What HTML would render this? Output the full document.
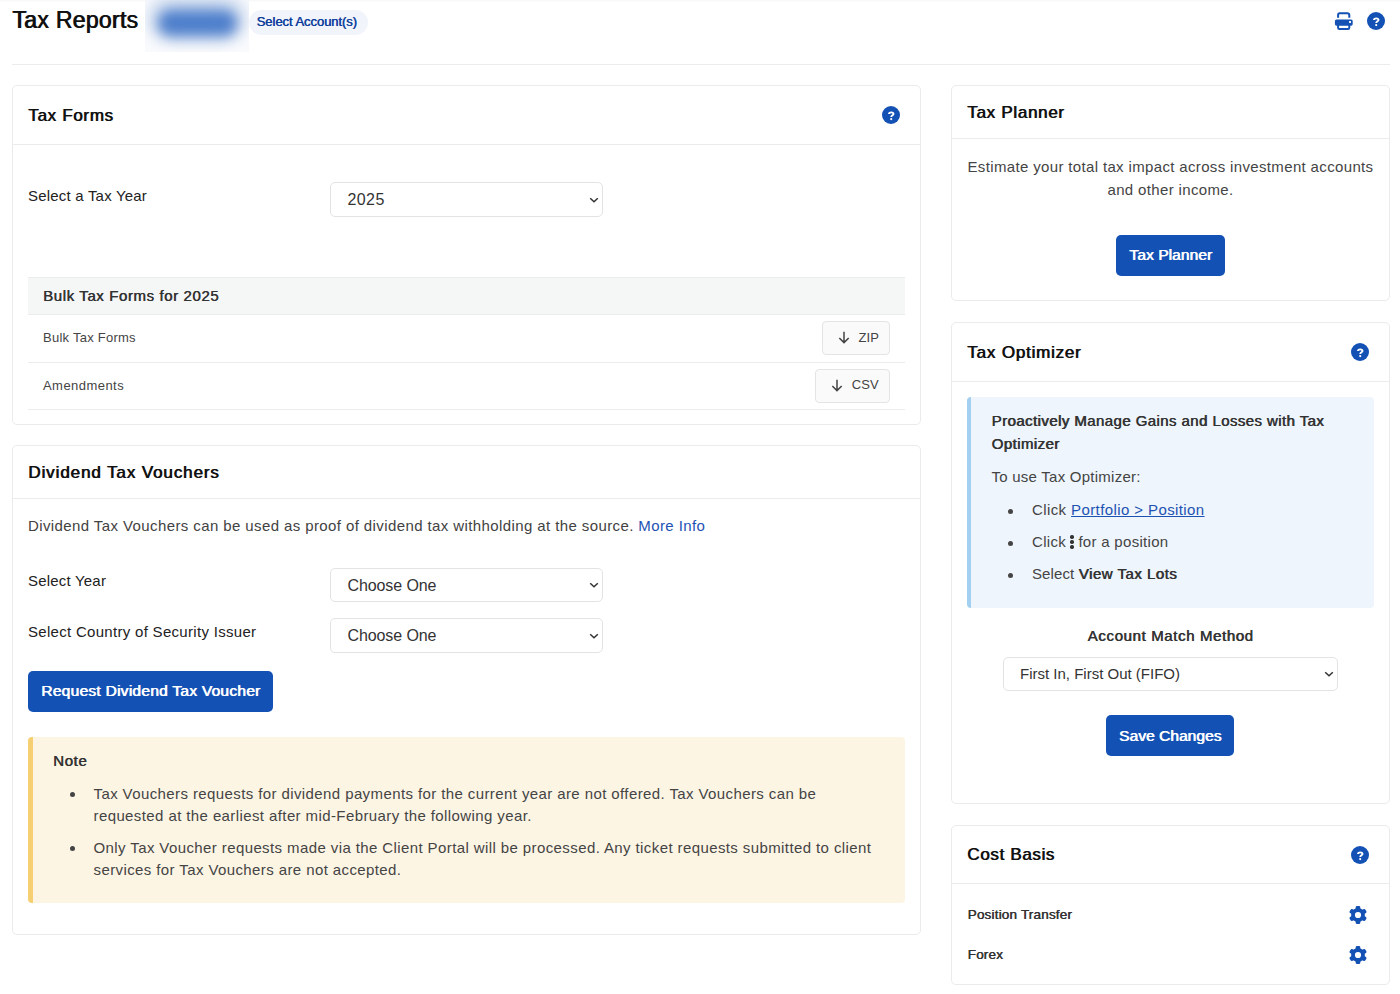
<!DOCTYPE html>
<html><head><meta charset="utf-8"><title>Tax Reports</title>
<style>
html,body{margin:0;padding:0;width:1400px;height:994px;overflow:hidden;background:#fff;}
body{position:relative;font-family:"Liberation Sans", sans-serif;}
.t{position:absolute;white-space:nowrap;}
.r{position:absolute;}
</style></head><body>
<div class="r" style="left:0px;top:0px;width:1400px;height:2px;background:linear-gradient(#f8f8f8 50%,#fcfcfc 50%)"></div>
<div class="t" style="left:12px;top:6px;font-size:23px;line-height:28px;font-weight:normal;color:#111;letter-spacing:0.3px;text-shadow:0.9px 0 0 #111;">Tax Reports</div>
<div class="r" style="left:145px;top:0px;width:104px;height:52px;overflow:hidden;background:#fafbfd"><div class="r" style="left:4px;top:-4px;width:96px;height:44px;border-radius:22px;background:rgba(90,135,205,0.30);filter:blur(9px)"></div><div class="r" style="left:13px;top:10px;width:79px;height:26px;border-radius:13px;background:#4d7ecb;filter:blur(6.5px)"></div></div>
<div class="r" style="left:249px;top:10px;width:119px;height:25px;background:#f1f4fb;border-radius:13px"></div>
<div class="t" style="left:256.5px;top:14px;font-size:13px;line-height:16px;font-weight:normal;color:#0f3e9c;letter-spacing:-0.05px;text-shadow:0.5px 0 0 #0f3e9c;">Select Account(s)</div>
<svg class="r" style="left:1333px;top:11px" width="21" height="20" viewBox="0 0 21 20"><path d="M5.1 6.7 V3.9 Q5.1 2.3 6.7 2.3 H14.3 Q16.3 2.3 16.3 4.3 V6.7" fill="none" stroke="#1351b4" stroke-width="2"/><rect x="5.1" y="12" width="11.2" height="6" rx="1.3" fill="#fff" stroke="#1351b4" stroke-width="2"/><rect x="1.9" y="8.4" width="17.8" height="6.3" rx="1.6" fill="#1351b4"/><rect x="16" y="10.1" width="2" height="1.8" fill="#fff"/></svg>
<svg class="r" style="left:1367.0px;top:12.0px" width="18" height="18" viewBox="0 0 18 18"><circle cx="9" cy="9" r="9" fill="#1351b4"/><path d="M7 7.9 C7 6.9 7.9 6.35 9.2 6.35 C10.6 6.35 11.5 7.0 11.5 8.0 C11.5 9.3 9.2 9.3 9.2 11.1" fill="none" stroke="#fff" stroke-width="1.9" stroke-linecap="butt"/><circle cx="9.2" cy="13.05" r="1.1" fill="#fff"/></svg>
<div class="r" style="left:12px;top:64px;width:1378px;height:1px;background:#ececec"></div>
<div class="r" style="left:12px;top:85px;width:909px;height:340px;border:1px solid #ebebeb;border-radius:5px;box-sizing:border-box;background:#fff"></div>
<div class="t" style="left:28px;top:104.7px;font-size:17px;line-height:22px;font-weight:normal;color:#111;letter-spacing:0.68px;text-shadow:0.75px 0 0 #111;">Tax Forms</div>
<svg class="r" style="left:882.0px;top:106.0px" width="18" height="18" viewBox="0 0 18 18"><circle cx="9" cy="9" r="9" fill="#1351b4"/><path d="M7 7.9 C7 6.9 7.9 6.35 9.2 6.35 C10.6 6.35 11.5 7.0 11.5 8.0 C11.5 9.3 9.2 9.3 9.2 11.1" fill="none" stroke="#fff" stroke-width="1.9" stroke-linecap="butt"/><circle cx="9.2" cy="13.05" r="1.1" fill="#fff"/></svg>
<div class="r" style="left:13px;top:144px;width:907px;height:1px;background:#ebebeb"></div>
<div class="t" style="left:28px;top:184.6px;font-size:15px;line-height:21px;font-weight:normal;color:#222;letter-spacing:0.2px;">Select a Tax Year</div>
<div class="r" style="left:330px;top:182px;width:273px;height:35px;border:1px solid #e3e3e3;border-radius:5px;box-sizing:border-box;background:#fff"></div>
<div class="t" style="left:347.5px;top:189px;font-size:16px;line-height:22px;font-weight:normal;color:#333;letter-spacing:0.4px;">2025</div>
<svg class="r" style="left:589px;top:195.5px" width="10" height="8" viewBox="0 0 10 8"><path d="M1.2 2.2 L5 5.8 L8.8 2.2" fill="none" stroke="#333" stroke-width="1.5"/></svg>
<div class="r" style="left:28px;top:277px;width:877px;height:38px;background:#f5f6f6;border-top:1px solid #ececec;border-bottom:1px solid #ececec;box-sizing:border-box"></div>
<div class="t" style="left:43px;top:284.7px;font-size:15px;line-height:21px;font-weight:normal;color:#333;letter-spacing:0.6px;text-shadow:0.45px 0 0 #333;">Bulk Tax Forms for 2025</div>
<div class="t" style="left:43px;top:329.1px;font-size:13px;line-height:18px;font-weight:normal;color:#444;letter-spacing:0.25px;">Bulk Tax Forms</div>
<div class="r" style="left:28px;top:362px;width:877px;height:1px;background:#ececec"></div>
<div class="t" style="left:43px;top:376.8px;font-size:13px;line-height:18px;font-weight:normal;color:#444;letter-spacing:0.45px;">Amendments</div>
<div class="r" style="left:28px;top:409px;width:877px;height:1px;background:#ececec"></div>
<div class="r" style="left:821.5px;top:321px;width:68.0px;height:33.5px;background:#fafafa;border:1px solid #e4e4e4;border-radius:4px;box-sizing:border-box"></div>
<svg class="r" style="left:837.5px;top:331.25px" width="12" height="13" viewBox="0 0 12 13"><path d="M6 0.8 V11.6 M1.3 7 L6 11.6 L10.7 7" fill="none" stroke="#444" stroke-width="1.5"/></svg>
<div class="t" style="left:858.5px;top:328.7px;font-size:13px;line-height:18px;font-weight:normal;color:#444;letter-spacing:0.1px;">ZIP</div>
<div class="r" style="left:814.5px;top:369px;width:75.0px;height:33.5px;background:#fafafa;border:1px solid #e4e4e4;border-radius:4px;box-sizing:border-box"></div>
<svg class="r" style="left:830.5px;top:379.25px" width="12" height="13" viewBox="0 0 12 13"><path d="M6 0.8 V11.6 M1.3 7 L6 11.6 L10.7 7" fill="none" stroke="#444" stroke-width="1.5"/></svg>
<div class="t" style="left:851.8px;top:376.2px;font-size:13px;line-height:18px;font-weight:normal;color:#444;letter-spacing:0.1px;">CSV</div>
<div class="r" style="left:12px;top:445px;width:909px;height:490px;border:1px solid #ebebeb;border-radius:5px;box-sizing:border-box;background:#fff"></div>
<div class="t" style="left:28px;top:461.7px;font-size:17px;line-height:22px;font-weight:normal;color:#111;letter-spacing:0.9px;text-shadow:0.75px 0 0 #111;">Dividend Tax Vouchers</div>
<div class="r" style="left:13px;top:498px;width:907px;height:1px;background:#ebebeb"></div>
<div class="t" style="left:28px;top:514.8px;font-size:15px;line-height:21px;font-weight:normal;color:#424242;letter-spacing:0.4px;">Dividend Tax Vouchers can be used as proof of dividend tax withholding at the source. <span style="color:#1d52b3">More Info</span></div>
<div class="t" style="left:28px;top:570.4px;font-size:15px;line-height:21px;font-weight:normal;color:#222;letter-spacing:0.2px;">Select Year</div>
<div class="r" style="left:330px;top:568px;width:273px;height:34px;border:1px solid #e3e3e3;border-radius:5px;box-sizing:border-box;background:#fff"></div>
<div class="t" style="left:347.5px;top:574.6px;font-size:16px;line-height:22px;font-weight:normal;color:#333;letter-spacing:-0.1px;">Choose One</div>
<svg class="r" style="left:589px;top:581.0px" width="10" height="8" viewBox="0 0 10 8"><path d="M1.2 2.2 L5 5.8 L8.8 2.2" fill="none" stroke="#333" stroke-width="1.5"/></svg>
<div class="t" style="left:28px;top:620.5px;font-size:15px;line-height:21px;font-weight:normal;color:#222;letter-spacing:0.3px;">Select Country of Security Issuer</div>
<div class="r" style="left:330px;top:618px;width:273px;height:35px;border:1px solid #e3e3e3;border-radius:5px;box-sizing:border-box;background:#fff"></div>
<div class="t" style="left:347.5px;top:624.8px;font-size:16px;line-height:22px;font-weight:normal;color:#333;letter-spacing:-0.1px;">Choose One</div>
<svg class="r" style="left:589px;top:631.5px" width="10" height="8" viewBox="0 0 10 8"><path d="M1.2 2.2 L5 5.8 L8.8 2.2" fill="none" stroke="#333" stroke-width="1.5"/></svg>
<div class="r" style="left:28px;top:671px;width:245px;height:41px;background:#1351b4;border-radius:5px"></div>
<div class="t" style="left:28.135px;top:680.3px;font-size:15.5px;line-height:22px;font-weight:normal;color:#fff;letter-spacing:0.27px;text-align:center;width:245px;text-shadow:0.75px 0 0 #fff;">Request Dividend Tax Voucher</div>
<div class="r" style="left:28px;top:736.5px;width:877px;height:166.5px;background:#fdf5e4;border-left:5px solid #f5cf72;border-radius:4px;box-sizing:border-box"></div>
<div class="t" style="left:53px;top:749.5px;font-size:15px;line-height:21px;font-weight:normal;color:#333;letter-spacing:0.6px;text-shadow:0.6px 0 0 #333;">Note</div>
<div class="r" style="left:70px;top:791.5px;width:5px;height:5px;border-radius:50%;background:#444"></div>
<div class="r" style="left:70px;top:846.0px;width:5px;height:5px;border-radius:50%;background:#444"></div>
<div class="t" style="left:93.5px;top:782.5px;font-size:15px;line-height:21px;font-weight:normal;color:#444;letter-spacing:0.4px;">Tax Vouchers requests for dividend payments for the current year are not offered. Tax Vouchers can be</div>
<div class="t" style="left:93.5px;top:804.6px;font-size:15px;line-height:21px;font-weight:normal;color:#444;letter-spacing:0.4px;">requested at the earliest after mid-February the following year.</div>
<div class="t" style="left:93.5px;top:837px;font-size:15px;line-height:21px;font-weight:normal;color:#444;letter-spacing:0.4px;">Only Tax Voucher requests made via the Client Portal will be processed. Any ticket requests submitted to client</div>
<div class="t" style="left:93.5px;top:859.1px;font-size:15px;line-height:21px;font-weight:normal;color:#444;letter-spacing:0.4px;">services for Tax Vouchers are not accepted.</div>
<div class="r" style="left:951px;top:85px;width:439px;height:216px;border:1px solid #ebebeb;border-radius:5px;box-sizing:border-box;background:#fff"></div>
<div class="t" style="left:967px;top:101.8px;font-size:17px;line-height:22px;font-weight:normal;color:#111;letter-spacing:0.7px;text-shadow:0.75px 0 0 #111;">Tax Planner</div>
<div class="r" style="left:952px;top:138px;width:437px;height:1px;background:#ebebeb"></div>
<div class="t" style="left:951px;top:155.5px;font-size:15px;line-height:21px;font-weight:normal;color:#444;letter-spacing:0.35px;text-align:center;width:439px;">Estimate your total tax impact across investment accounts</div>
<div class="t" style="left:951px;top:179.3px;font-size:15px;line-height:21px;font-weight:normal;color:#444;letter-spacing:0.35px;text-align:center;width:439px;">and other income.</div>
<div class="r" style="left:1116px;top:235px;width:109px;height:41px;background:#1351b4;border-radius:5px"></div>
<div class="t" style="left:1116.05px;top:244.2px;font-size:15.5px;line-height:22px;font-weight:normal;color:#fff;letter-spacing:0.1px;text-align:center;width:109px;text-shadow:0.75px 0 0 #fff;">Tax Planner</div>
<div class="r" style="left:951px;top:322px;width:439px;height:482px;border:1px solid #ebebeb;border-radius:5px;box-sizing:border-box;background:#fff"></div>
<div class="t" style="left:967px;top:341.8px;font-size:17px;line-height:22px;font-weight:normal;color:#111;letter-spacing:0.8px;text-shadow:0.75px 0 0 #111;">Tax Optimizer</div>
<svg class="r" style="left:1351.0px;top:343.0px" width="18" height="18" viewBox="0 0 18 18"><circle cx="9" cy="9" r="9" fill="#1351b4"/><path d="M7 7.9 C7 6.9 7.9 6.35 9.2 6.35 C10.6 6.35 11.5 7.0 11.5 8.0 C11.5 9.3 9.2 9.3 9.2 11.1" fill="none" stroke="#fff" stroke-width="1.9" stroke-linecap="butt"/><circle cx="9.2" cy="13.05" r="1.1" fill="#fff"/></svg>
<div class="r" style="left:952px;top:381px;width:437px;height:1px;background:#ebebeb"></div>
<div class="r" style="left:967px;top:397px;width:407px;height:211px;background:#eef5fc;border-left:4px solid #a3d0f0;border-radius:4px;box-sizing:border-box"></div>
<div class="t" style="left:991.5px;top:409.9px;font-size:15px;line-height:21px;font-weight:normal;color:#333;letter-spacing:0.42px;text-shadow:0.6px 0 0 #333;">Proactively Manage Gains and Losses with Tax</div>
<div class="t" style="left:991.5px;top:433.4px;font-size:15px;line-height:21px;font-weight:normal;color:#333;letter-spacing:0.42px;text-shadow:0.6px 0 0 #333;">Optimizer</div>
<div class="t" style="left:991.5px;top:466.3px;font-size:15px;line-height:21px;font-weight:normal;color:#444;letter-spacing:0.25px;">To use Tax Optimizer:</div>
<div class="r" style="left:1008px;top:508.8px;width:5px;height:5px;border-radius:50%;background:#444"></div>
<div class="r" style="left:1008px;top:540.8px;width:5px;height:5px;border-radius:50%;background:#444"></div>
<div class="r" style="left:1008px;top:572.8px;width:5px;height:5px;border-radius:50%;background:#444"></div>
<div class="t" style="left:1032px;top:499.4px;font-size:15px;line-height:21px;font-weight:normal;color:#444;letter-spacing:0.4px;">Click <span style="color:#1d52b3;text-decoration:underline">Portfolio &gt; Position</span></div>
<div class="t" style="left:1032px;top:531.3px;font-size:15px;line-height:21px;font-weight:normal;color:#444;letter-spacing:0.3px;">Click</div>
<div class="r" style="left:1070.3px;top:535.3px;width:3.4px;height:3.4px;border-radius:50%;background:#333"></div>
<div class="r" style="left:1070.3px;top:540.3px;width:3.4px;height:3.4px;border-radius:50%;background:#333"></div>
<div class="r" style="left:1070.3px;top:545.3px;width:3.4px;height:3.4px;border-radius:50%;background:#333"></div>
<div class="t" style="left:1078.4px;top:531.3px;font-size:15px;line-height:21px;font-weight:normal;color:#444;letter-spacing:0.3px;">for a position</div>
<div class="t" style="left:1032px;top:563.4px;font-size:15px;line-height:21px;font-weight:normal;color:#444;letter-spacing:0.1px;">Select <span style="color:#333;text-shadow:0.6px 0 0 #333;letter-spacing:0.5px">View Tax Lots</span></div>
<div class="t" style="left:951px;top:625.2px;font-size:15px;line-height:21px;font-weight:normal;color:#333;letter-spacing:0.63px;text-align:center;width:439px;text-shadow:0.6px 0 0 #333;">Account Match Method</div>
<div class="r" style="left:1003px;top:657px;width:335px;height:34px;border:1px solid #e3e3e3;border-radius:5px;box-sizing:border-box;background:#fff"></div>
<div class="t" style="left:1020px;top:662.8px;font-size:15px;line-height:21px;font-weight:normal;color:#333;">First In, First Out (FIFO)</div>
<svg class="r" style="left:1324px;top:670.0px" width="10" height="8" viewBox="0 0 10 8"><path d="M1.2 2.2 L5 5.8 L8.8 2.2" fill="none" stroke="#333" stroke-width="1.5"/></svg>
<div class="r" style="left:1106px;top:715px;width:128px;height:41px;background:#1351b4;border-radius:5px"></div>
<div class="t" style="left:1106.03px;top:724.5px;font-size:15.5px;line-height:22px;font-weight:normal;color:#fff;letter-spacing:0.06px;text-align:center;width:128px;text-shadow:0.75px 0 0 #fff;">Save Changes</div>
<div class="r" style="left:951px;top:825px;width:439px;height:160px;border:1px solid #ebebeb;border-radius:5px;box-sizing:border-box;background:#fff"></div>
<div class="t" style="left:967px;top:844px;font-size:17px;line-height:22px;font-weight:normal;color:#111;letter-spacing:0.65px;text-shadow:0.75px 0 0 #111;">Cost Basis</div>
<svg class="r" style="left:1351.0px;top:845.5px" width="18" height="18" viewBox="0 0 18 18"><circle cx="9" cy="9" r="9" fill="#1351b4"/><path d="M7 7.9 C7 6.9 7.9 6.35 9.2 6.35 C10.6 6.35 11.5 7.0 11.5 8.0 C11.5 9.3 9.2 9.3 9.2 11.1" fill="none" stroke="#fff" stroke-width="1.9" stroke-linecap="butt"/><circle cx="9.2" cy="13.05" r="1.1" fill="#fff"/></svg>
<div class="r" style="left:952px;top:883px;width:437px;height:1px;background:#ebebeb"></div>
<div class="t" style="left:967.5px;top:904.8px;font-size:13.5px;line-height:19px;font-weight:normal;color:#333;letter-spacing:0.18px;text-shadow:0.5px 0 0 #333;">Position Transfer</div>
<div class="t" style="left:967.5px;top:945px;font-size:13.5px;line-height:19px;font-weight:normal;color:#333;letter-spacing:0.18px;text-shadow:0.5px 0 0 #333;">Forex</div>
<svg class="r" style="left:1349px;top:905.6px" width="18" height="18" viewBox="0 0 18 18"><g fill="#1351b4"><circle cx="9" cy="9" r="6.9"/><rect x="6.7" y="-0.1" width="4.6" height="9" rx="1.7" transform="rotate(0 9 9)"/><rect x="6.7" y="-0.1" width="4.6" height="9" rx="1.7" transform="rotate(60 9 9)"/><rect x="6.7" y="-0.1" width="4.6" height="9" rx="1.7" transform="rotate(120 9 9)"/><rect x="6.7" y="-0.1" width="4.6" height="9" rx="1.7" transform="rotate(180 9 9)"/><rect x="6.7" y="-0.1" width="4.6" height="9" rx="1.7" transform="rotate(240 9 9)"/><rect x="6.7" y="-0.1" width="4.6" height="9" rx="1.7" transform="rotate(300 9 9)"/></g><circle cx="9" cy="9" r="3.1" fill="#fff"/></svg>
<svg class="r" style="left:1349px;top:945.8px" width="18" height="18" viewBox="0 0 18 18"><g fill="#1351b4"><circle cx="9" cy="9" r="6.9"/><rect x="6.7" y="-0.1" width="4.6" height="9" rx="1.7" transform="rotate(0 9 9)"/><rect x="6.7" y="-0.1" width="4.6" height="9" rx="1.7" transform="rotate(60 9 9)"/><rect x="6.7" y="-0.1" width="4.6" height="9" rx="1.7" transform="rotate(120 9 9)"/><rect x="6.7" y="-0.1" width="4.6" height="9" rx="1.7" transform="rotate(180 9 9)"/><rect x="6.7" y="-0.1" width="4.6" height="9" rx="1.7" transform="rotate(240 9 9)"/><rect x="6.7" y="-0.1" width="4.6" height="9" rx="1.7" transform="rotate(300 9 9)"/></g><circle cx="9" cy="9" r="3.1" fill="#fff"/></svg>
</body></html>
